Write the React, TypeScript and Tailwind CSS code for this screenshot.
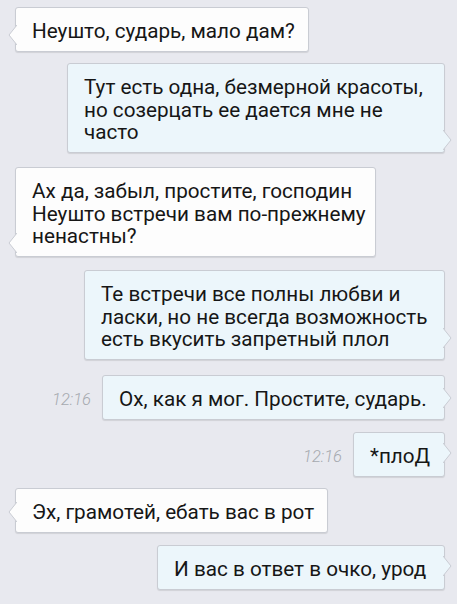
import React from 'react';

type Msg = {
  side: 'left' | 'right';
  lines: string[];
  width: string;
  time?: string;
  gap: string;
  tail: string;
};

const messages: Msg[] = [
  { side: 'left', lines: ['Неушто, сударь, мало дам?'], width: 'w-[294px]', gap: 'mt-[7px]', tail: 'bottom-[6px]' },
  {
    side: 'right',
    lines: ['Тут есть одна, безмерной красоты,', 'но созерцать ее дается мне не', 'часто'],
    width: 'w-[378px]',
    gap: 'mt-[11.5px]',
    tail: 'bottom-[2px]',
  },
  {
    side: 'left',
    lines: ['Ах да, забыл, простите, господин', 'Неушто встречи вам по-прежнему', 'ненастны?'],
    width: 'w-[361px]',
    gap: 'mt-[14.5px]',
    tail: 'bottom-[3px]',
  },
  {
    side: 'right',
    lines: ['Те встречи все полны любви и', 'ласки, но не всегда возможность', 'есть вкусить запретный плол'],
    width: 'w-[361px]',
    gap: 'mt-[13.5px]',
    tail: 'bottom-[11px]',
  },
  {
    side: 'right',
    lines: ['Ох, как я мог. Простите, сударь.'],
    width: 'w-[343px]',
    time: '12:16',
    gap: 'mt-[15.5px]',
    tail: 'bottom-[11px]',
  },
  { side: 'right', lines: ['*плоД'], width: 'w-[92px]', time: '12:16', gap: 'mt-[12.5px]', tail: 'bottom-[13px]' },
  { side: 'left', lines: ['Эх, грамотей, ебать вас в рот'], width: 'w-[313px]', gap: 'mt-[11.5px]', tail: 'bottom-[10px]' },
  { side: 'right', lines: ['И вас в ответ в очко, урод'], width: 'w-[288px]', gap: 'mt-[12.5px]', tail: 'bottom-[13px]' },
];

// small chevron that sticks out of the bubble edge
const Tail: React.FC<{ side: 'left' | 'right'; pos: string }> = ({ side, pos }) => {
  const fill = side === 'left' ? '#fdfdfd' : '#ecf6fb';
  if (side === 'left') {
    return (
      <svg width="10" height="20" viewBox="0 0 10 20" className={`absolute left-[-9px] ${pos}`}>
        <polygon points="10,0 2,10 10,20" fill={fill} />
        <polyline points="10,0 2,10 10,20" fill="none" stroke="#c9ccd3" strokeWidth="1" strokeLinejoin="round" />
      </svg>
    );
  }
  return (
    <svg width="10" height="20" viewBox="0 0 10 20" className={`absolute right-[-9px] ${pos}`}>
      <polygon points="0,0 8,10 0,20" fill={fill} />
      <polyline points="0,0 8,10 0,20" fill="none" stroke="#c9ccd3" strokeWidth="1" strokeLinejoin="round" />
    </svg>
  );
};

const Bubble: React.FC<{ m: Msg }> = ({ m }) => {
  const bg = m.side === 'left' ? 'bg-[#fdfdfd]' : 'bg-[#ecf6fb]';
  return (
    <div
      className={`relative ${m.width} ${bg} border border-[#c9ccd3] rounded-[3px] shadow-[0_1px_1px_rgba(0,0,0,0.10)] px-4 pt-[12px] pb-[8px] text-[20.7px] leading-[22.5px] text-[#161616] whitespace-nowrap`}
    >
      {m.lines.map((l, i) => (
        <div key={i}>{l}</div>
      ))}
      <Tail side={m.side} pos={m.tail} />
    </div>
  );
};

export default function App() {
  return (
    <div className="w-[457px] h-[604px] overflow-hidden bg-[#e8e9ef] flex flex-col font-['Roboto',sans-serif]">
      {messages.map((m, i) => (
        <div
          key={i}
          className={`${m.gap} flex items-center ${m.side === 'left' ? 'justify-start pl-[15px]' : 'justify-end pr-[12px]'}`}
        >
          {m.time && (
            <span className="mr-[11px] mt-[6px] text-[16.5px] italic font-light text-[#a6a9b0]">{m.time}</span>
          )}
          <Bubble m={m} />
        </div>
      ))}
    </div>
  );
}
